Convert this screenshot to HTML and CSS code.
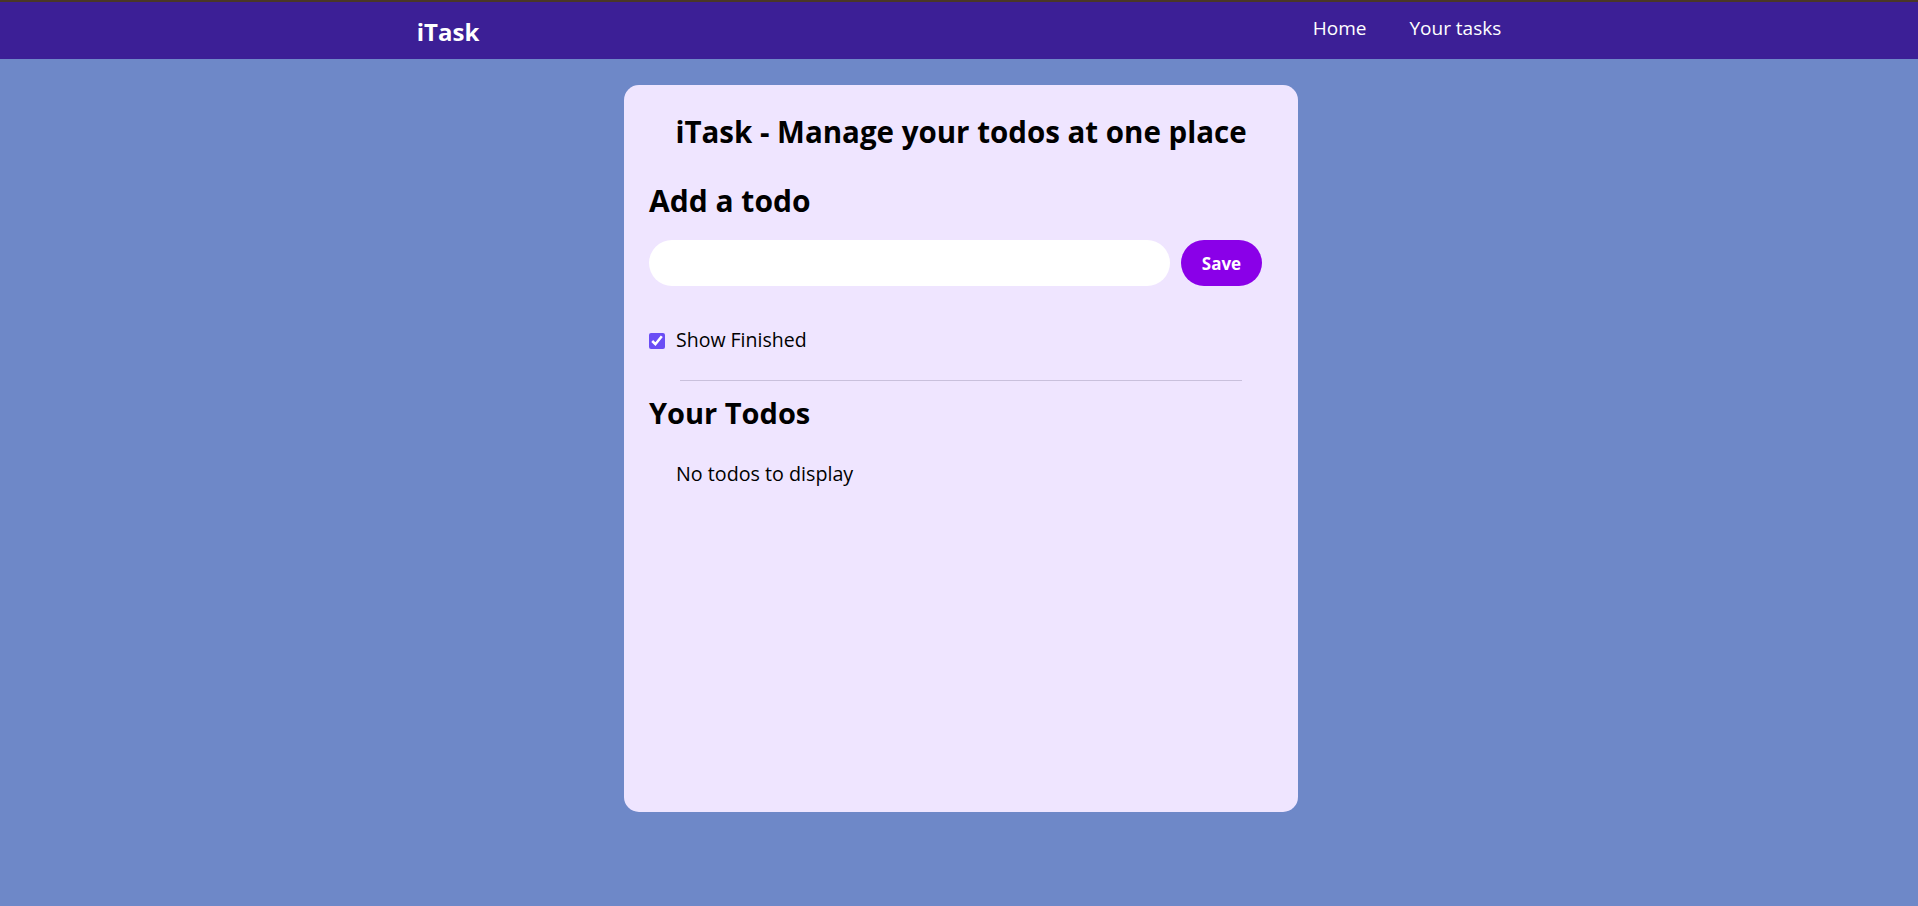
FILE: index.html
```html
<!DOCTYPE html>
<html lang="en">
<head>
<meta charset="utf-8">
<title>iTask</title>
<link rel="stylesheet" href="styles.css">
</head>
<body>
<nav class="navbar">
  <div class="logo">iTask</div>
  <ul class="nav-links">
    <li>Home</li>
    <li>Your tasks</li>
  </ul>
</nav>
<main class="card">
  <h1 class="title">iTask - Manage your todos at one place</h1>
  <h2 class="add-heading">Add a todo</h2>
  <div class="add-row">
    <input class="todo-input" type="text">
    <button class="save-btn">Save</button>
  </div>
  <label class="show-finished">
    <input class="finished-check" type="checkbox" checked>
    <span>Show Finished</span>
  </label>
  <div class="divider"></div>
  <h2 class="todos-heading">Your Todos</h2>
  <div class="todos">
    <div class="empty">No todos to display</div>
  </div>
</main>
</body>
</html>
```

FILE: styles.css
```css
* { box-sizing: border-box; }
html, body { margin: 0; padding: 0; }
body {
  background: #6e88c8;
  font-family: "Open Sans", "Noto Sans", sans-serif;
  color: #000;
  min-height: 906px;
}
.navbar {
  height: 59px;
  border-top: 2px solid #4a3727;
  background: #3c1f96;
  color: #fff;
  display: flex;
  justify-content: space-around;
  align-items: flex-start;
}
.logo {
  font-size: 24px;
  font-weight: 700;
  line-height: 24px;
  padding-top: 18px;
}
.nav-links {
  list-style: none;
  margin: 0;
  padding: 17px 0 0;
  display: flex;
  gap: 43px;
  font-size: 19px;
  line-height: 19px;
}
.card {
  display: block;
  width: 674px;
  height: 727px;
  margin: 26px 0 0 calc(50% - 335px);
  padding: 25px;
  background: #efe5ff;
  border-radius: 15px;
}
.title {
  margin: 2px 0 0;
  font-size: 29.5px;
  line-height: 40px;
  font-weight: 700;
  text-align: center;
}
.add-heading {
  margin: 31px 0 0;
  font-size: 30px;
  line-height: 35px;
  font-weight: 700;
}
.add-row {
  margin-top: 22px;
  display: flex;
  height: 46px;
}
.todo-input {
  flex: 1;
  height: 46px;
  border: none;
  border-radius: 23px;
  background: #fff;
  padding: 0 20px;
  font: inherit;
  outline: none;
}
.save-btn {
  margin: 0 11px 0 11px;
  width: 81px;
  height: 46px;
  border: none;
  border-radius: 23px;
  background: #8a00e8;
  color: #fff;
  font-family: inherit;
  font-weight: 700;
  font-size: 17px;
  padding: 0;
}
.show-finished {
  margin-top: 39px;
  display: flex;
  align-items: center;
  height: 30px;
  font-size: 19.5px;
  line-height: 30px;
}
.finished-check {
  margin: 1px 11px 0 0;
  width: 16px;
  height: 16px;
  accent-color: #6a4df5;
}
.divider {
  margin: 25px auto 0;
  width: 90%;
  height: 1px;
  background: #c9c0dc;
}
.todos-heading {
  margin: 12px 0 0;
  font-size: 29px;
  line-height: 40px;
  font-weight: 700;
}
.todos {
  margin: 26px 0 0 27px;
}
.empty {
  font-size: 19.7px;
  line-height: 30px;
}
```
